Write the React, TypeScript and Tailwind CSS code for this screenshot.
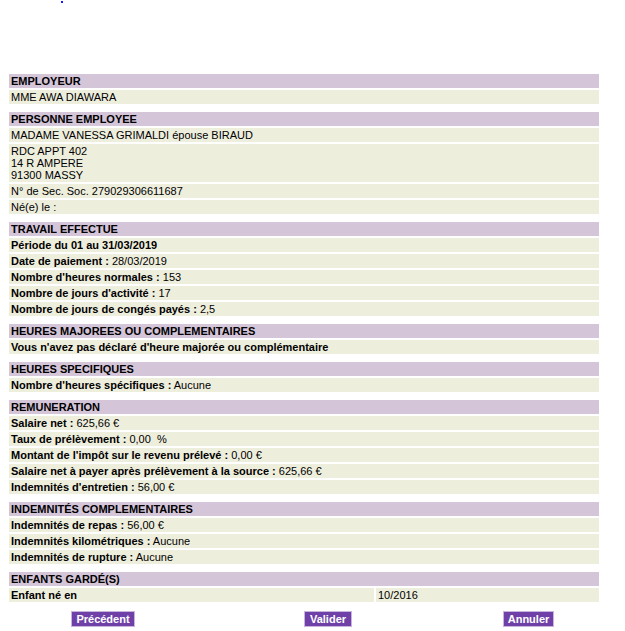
import React from 'react';

type Row = { label?: string; value?: string; bold?: boolean; lines?: string[] };
type Section = { title: string; rows: Row[] };

const sections: Section[] = [
  { title: 'EMPLOYEUR', rows: [{ value: 'MME AWA DIAWARA' }] },
  {
    title: 'PERSONNE EMPLOYEE',
    rows: [
      { value: 'MADAME VANESSA GRIMALDI épouse BIRAUD' },
      { lines: ['RDC APPT 402', '14 R AMPERE', '91300 MASSY'] },
      { value: 'N° de Sec. Soc. 279029306611687' },
      { value: 'Né(e) le :' },
    ],
  },
  {
    title: 'TRAVAIL EFFECTUE',
    rows: [
      { label: 'Période du 01 au 31/03/2019' },
      { label: 'Date de paiement :', value: '28/03/2019' },
      { label: "Nombre d'heures normales :", value: '153' },
      { label: "Nombre de jours d'activité :", value: '17' },
      { label: 'Nombre de jours de congés payés :', value: '2,5' },
    ],
  },
  {
    title: 'HEURES MAJOREES OU COMPLEMENTAIRES',
    rows: [{ label: "Vous n'avez pas déclaré d'heure majorée ou complémentaire" }],
  },
  {
    title: 'HEURES SPECIFIQUES',
    rows: [{ label: "Nombre d'heures spécifiques :", value: 'Aucune' }],
  },
  {
    title: 'REMUNERATION',
    rows: [
      { label: 'Salaire net :', value: '625,66 €' },
      { label: 'Taux de prélèvement :', value: '0,00\u00a0 %' },
      { label: "Montant de l'impôt sur le revenu prélevé :", value: '0,00 €' },
      { label: 'Salaire net à payer après prélèvement à la source :', value: '625,66 €' },
      { label: "Indemnités d'entretien :", value: '56,00 €' },
    ],
  },
  {
    title: 'INDEMNITÉS COMPLEMENTAIRES',
    rows: [
      { label: 'Indemnités de repas :', value: '56,00 €' },
      { label: 'Indemnités kilométriques :', value: 'Aucune' },
      { label: 'Indemnités de rupture :', value: 'Aucune' },
    ],
  },
];

const cell = 'bg-[#eeeedd] px-[2px] py-px leading-[12px]';

export default function App() {
  return (
    <div className="relative min-h-[631px] bg-white text-[11px] text-black" style={{ fontFamily: '"Liberation Sans", Arial, sans-serif' }}>
      {/* petit point bleu en haut */}
      <div className="absolute left-[61px] top-px h-[2px] w-[2px] bg-[#1a1aff]" />

      <div className="ml-[9px] w-[590px] pt-[74px]">
        {sections.map(section => (
          <div key={section.title} className="mb-[8px] flex flex-col gap-[2px]">
            <div className="bg-[#d4c5d8] px-[2px] py-px font-bold leading-[12px]">{section.title}</div>
            {section.rows.map((row, i) => (
              <div key={i} className={cell}>
                {row.lines ? (
                  row.lines.map(l => <div key={l}>{l}</div>)
                ) : (
                  <>
                    {row.label && <span className="font-bold">{row.label}</span>}
                    {row.label && row.value ? ' ' : ''}
                    {row.value}
                  </>
                )}
              </div>
            ))}
          </div>
        ))}

        <div className="flex flex-col gap-[2px]">
          <div className="bg-[#d4c5d8] px-[2px] py-px font-bold leading-[12px]">ENFANTS GARDÉ(S)</div>
          <div className="flex gap-[2px]">
            <div className={`${cell} w-[365px] font-bold`}>Enfant né en</div>
            <div className={`${cell} flex-1`}>10/2016</div>
          </div>
        </div>

        <div className="mt-[9px] flex">
          <button className="ml-[62px] h-[16px] w-[64px] border border-[#c7b5dc] bg-[#6f41a8] text-[11px] font-bold leading-[14px] text-white">
            Précédent
          </button>
          <button className="ml-[169px] h-[16px] w-[48px] border border-[#c7b5dc] bg-[#6f41a8] text-[11px] font-bold leading-[14px] text-white">
            Valider
          </button>
          <button className="ml-[151px] h-[16px] w-[51px] border border-[#c7b5dc] bg-[#6f41a8] text-[11px] font-bold leading-[14px] text-white">
            Annuler
          </button>
        </div>
      </div>
    </div>
  );
}
